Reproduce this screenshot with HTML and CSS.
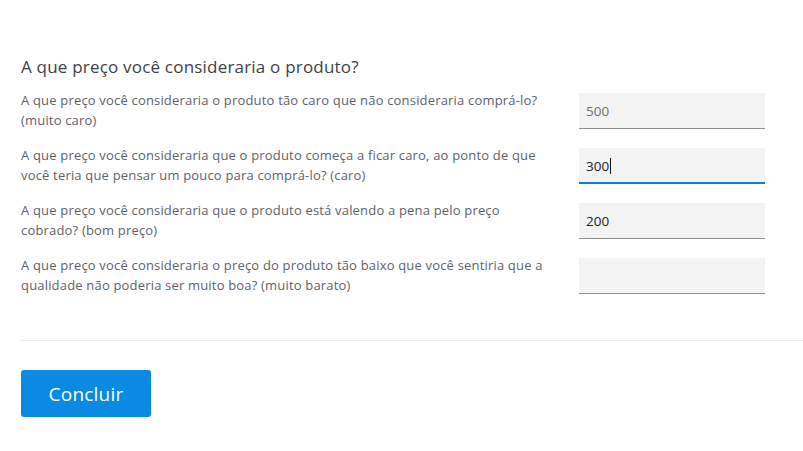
FILE: index.html
```html
<!DOCTYPE html>
<html lang="pt">
<head>
<meta charset="utf-8">
<link rel="stylesheet" href="styles.css">
</head>
<body>
<main class="page">
  <section class="survey">
    <h2 class="title">A que preço você consideraria o produto?</h2>
    <div class="rows">
      <div class="row">
        <label class="label">A que preço você consideraria o produto tão caro que não consideraria comprá-lo? (muito caro)</label>
        <div class="field"><span class="value muted">500</span></div>
      </div>
      <div class="row">
        <label class="label">A que preço você consideraria que o produto começa a ficar caro, ao ponto de que você teria que pensar um pouco para comprá-lo? (caro)</label>
        <div class="field focused"><span class="value dark">300</span><span class="caret"></span></div>
      </div>
      <div class="row">
        <label class="label">A que preço você consideraria que o produto está valendo a pena pelo preço cobrado? (bom preço)</label>
        <div class="field"><span class="value dark">200</span></div>
      </div>
      <div class="row">
        <label class="label">A que preço você consideraria o preço do produto tão baixo que você sentiria que a qualidade não poderia ser muito boa? (muito barato)</label>
        <div class="field"></div>
      </div>
    </div>
  </section>
  <hr class="divider">
  <div class="actions">
    <button class="btn">Concluir</button>
  </div>
</main>
</body>
</html>
```

FILE: styles.css
```css
* { box-sizing: border-box; }
html, body { margin: 0; padding: 0; background: #fff; }
body {
  font-family: "Open Sans", "Noto Sans", sans-serif;
  color: #5e626a;
}
.page { padding: 56px 0 0 21px; }
.survey { padding-right: 38px; }
.title {
  margin: 0 0 15px;
  font-size: 17px;
  letter-spacing: 0.2px;
  font-weight: 400;
  color: #3d4149;
  line-height: 22px;
}
.rows { display: flex; flex-direction: column; gap: 19px; }
.row {
  display: flex;
  justify-content: space-between;
  align-items: flex-start;
}
.label {
  width: 530px;
  font-size: 13px;
  letter-spacing: 0.18px;
  line-height: 20px;
  margin: -3px 0 -1px;
}
.field {
  width: 186px;
  height: 36px;
  flex: none;
  background: #f3f3f3;
  border-bottom: 1px solid #8e8e8e;
  display: flex;
  align-items: center;
  padding-left: 7px;
  font-size: 13.5px;
}
.field.focused { border-bottom: 2px solid #0a80d6; padding-top: 1px; }
.value.muted { color: #6f6f6f; }
.value.dark { color: #222; }
.caret { display: inline-block; width: 1px; height: 16px; background: #111; margin-left: 1px; }
.divider {
  margin: 46px 0 0;
  border: 0;
  border-top: 1px solid #ececec;
}
.actions { padding-top: 29px; }
.btn {
  width: 130px;
  height: 47px;
  background: #0a8ae2;
  color: #fff;
  border: 0;
  border-radius: 3px;
  font-family: "Open Sans", "Noto Sans", sans-serif;
  font-size: 19px;
  letter-spacing: 0.2px;
  padding: 0;
}
```
